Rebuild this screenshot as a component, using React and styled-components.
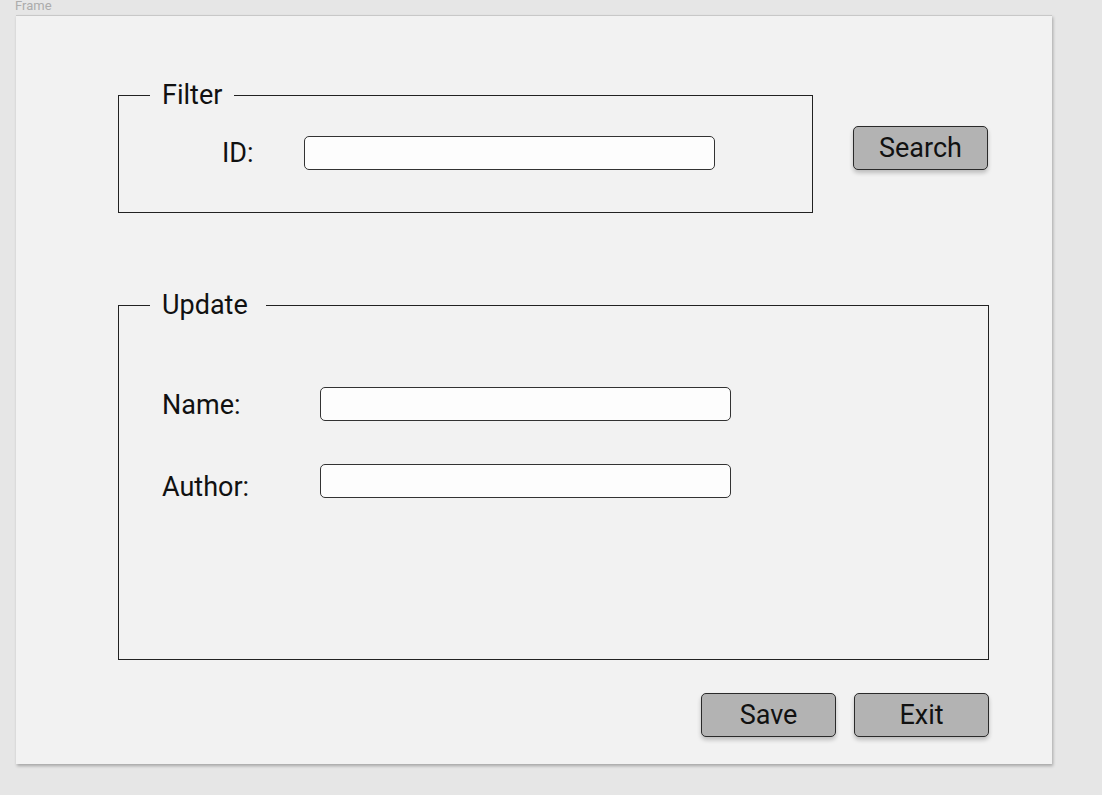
import React from "react";
import styled, { createGlobalStyle } from "styled-components";

const GlobalStyle = createGlobalStyle`
  html, body {
    margin: 0;
    padding: 0;
    background: #e6e6e6;
    font-family: Roboto, "Liberation Sans", sans-serif;
  }
`;

const Page = styled.div`
  width: 1102px;
  height: 795px;
  overflow: hidden;
  padding-left: 16px;
  box-sizing: border-box;
`;

const FrameLabel = styled.div`
  height: 15px;
  margin-left: -1px;
  font-size: 13px;
  line-height: 11px;
  color: #acacac;
  overflow: hidden;
`;

const Frame = styled.div`
  width: 1036px;
  height: 749px;
  box-sizing: border-box;
  background: #f2f2f2;
  border-top: 1px solid #c8c8c8;
  box-shadow: 1px 2px 3px rgba(0, 0, 0, 0.28);
  padding: 64px 0 0 102px;
  display: flex;
  flex-direction: column;
`;

const TopRow = styled.div`
  display: flex;
  align-items: flex-start;
  gap: 40px;
`;

const Group = styled.fieldset`
  margin: 0;
  padding: 0;
  border: 1px solid #222;
  width: ${(p) => p.width}px;
  height: ${(p) => p.height}px;
  box-sizing: border-box;
  min-width: 0;
`;

const Legend = styled.legend`
  margin-left: 31px;
  padding: 0 ${(p) => p.gap || 12}px 0 12px;
  font-size: 27px;
  line-height: 30px;
  color: #111;
`;

const FilterBody = styled.div`
  display: flex;
  align-items: flex-start;
  padding: 26px 0 0 103px;
`;

const Row = styled.div`
  display: flex;
  align-items: flex-start;
`;

const Label = styled.span`
  font-size: 27px;
  line-height: 34px;
  color: #111;
  width: ${(p) => p.width}px;
  margin-top: ${(p) => p.drop || 0}px;
  margin-bottom: ${(p) => -(p.drop || 0)}px;
`;

const Input = styled.input`
  width: 411px;
  height: 34px;
  box-sizing: border-box;
  background: #fdfdfd;
  border: 1px solid #333;
  border-radius: 5px;
  padding: 0 8px;
  outline: none;
  font: inherit;
`;

const Button = styled.button`
  width: 135px;
  height: 44px;
  box-sizing: border-box;
  background: #b3b3b3;
  border: 1px solid #2a2a2a;
  border-radius: 5px;
  box-shadow: 0 3px 4px rgba(0, 0, 0, 0.22);
  font-family: Roboto, "Liberation Sans", sans-serif;
  font-size: 27px;
  color: #111;
  padding: 0;
  cursor: pointer;
`;

const SearchButton = styled(Button)`
  margin-top: 46px;
`;

const UpdateWrap = styled.div`
  margin-top: 77px;
`;

const UpdateBody = styled.div`
  display: flex;
  flex-direction: column;
  gap: 43px;
  padding: 67px 0 0 43px;
`;

const Footer = styled.div`
  display: flex;
  justify-content: flex-end;
  gap: 18px;
  width: 871px;
  margin-top: 33px;
`;

export default function App() {
  return (
    <>
      <GlobalStyle />
      <Page>
        <FrameLabel>Frame</FrameLabel>
        <Frame>
          <TopRow>
            <Group width={695} height={133}>
              <Legend>Filter</Legend>
              <FilterBody>
                <Label width={82}>ID:</Label>
                <Input />
              </FilterBody>
            </Group>
            <SearchButton>Search</SearchButton>
          </TopRow>
          <UpdateWrap>
            <Group width={871} height={370}>
              <Legend gap={18}>Update</Legend>
              <UpdateBody>
                <Row>
                  <Label width={158} drop={1}>Name:</Label>
                  <Input />
                </Row>
                <Row>
                  <Label width={158} drop={6}>Author:</Label>
                  <Input />
                </Row>
              </UpdateBody>
            </Group>
          </UpdateWrap>
          <Footer>
            <Button>Save</Button>
            <Button>Exit</Button>
          </Footer>
        </Frame>
      </Page>
    </>
  );
}
